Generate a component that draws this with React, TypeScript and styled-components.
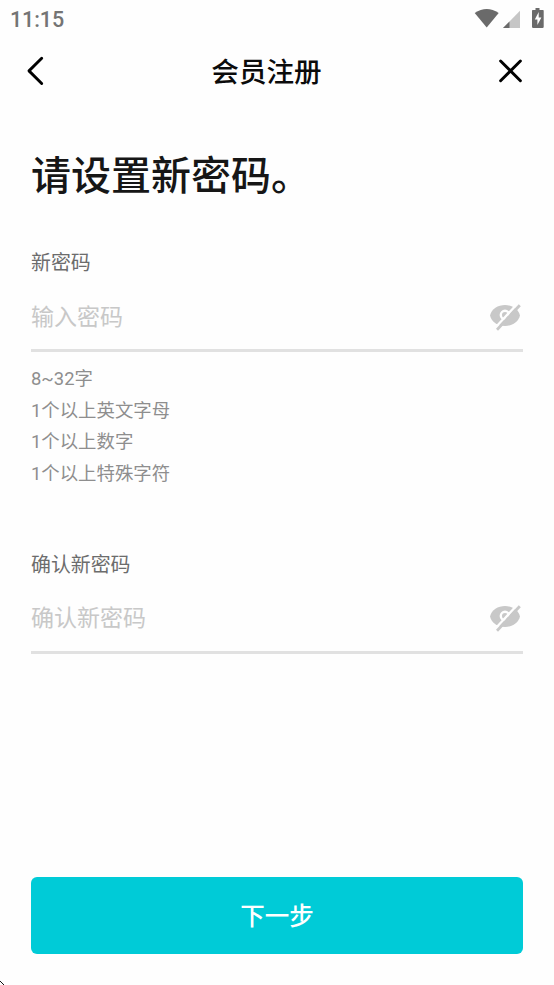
import React from "react";
import styled, { createGlobalStyle } from "styled-components";

const GlobalStyle = createGlobalStyle`
  * { box-sizing: border-box; }
  body {
    margin: 0;
    background: #fefefe;
    font-family: Roboto, "Noto Sans CJK SC", sans-serif;
  }
`;

const Screen = styled.main`
  display: flex;
  flex-direction: column;
  position: relative;
  height: 985px;
  overflow: hidden;
`;

const StatusBar = styled.div`
  display: flex;
  justify-content: space-between;
  height: 40px;
  padding: 0 10px;
`;

const Clock = styled.span`
  color: #747474;
  font-size: 21.5px;
  font-weight: 500;
  line-height: 40px;
  letter-spacing: -0.1px;
`;

const StatusIcons = styled.svg`
  width: 72px;
  height: 40px;
`;

const Header = styled.header`
  display: grid;
  grid-template-columns: 60px 1fr 60px;
  align-items: center;
  height: 62px;
`;

const IconButton = styled.button<{ $side: "start" | "end" }>`
  display: flex;
  justify-self: ${(p) => p.$side};
  margin: ${(p) => (p.$side === "start" ? "0 0 0 22px" : "0 28px 0 0")};
  padding: 0;
  border: 0;
  background: none;
`;

const Title = styled.h1`
  margin: 0;
  padding: 4px 21px 0 0;
  color: #0b0b0b;
  font-size: 27.6px;
  font-weight: 500;
  line-height: 40px;
  text-align: center;
`;

const Content = styled.section`
  display: flex;
  flex-direction: column;
  padding: 45px 31px 0;
`;

const Heading = styled.h2`
  margin: 0 0 44px;
  color: #161616;
  font-size: 40px;
  font-weight: 500;
  line-height: 60px;
`;

const Field = styled.label<{ $gap?: number }>`
  display: flex;
  flex-direction: column;
  margin-top: ${(p) => p.$gap ?? 0}px;
`;

const FieldLabel = styled.span`
  padding-top: 1px;
  color: #6c6c6c;
  font-size: 19.9px;
  line-height: 24px;
`;

const InputRow = styled.span`
  display: flex;
  align-items: center;
  height: 76px;
  padding-top: 6px;
  border-bottom: 3px solid #e1e1e1;
`;

const PasswordInput = styled.input`
  flex: 1;
  min-width: 0;
  height: 44px;
  padding: 3px 0 0;
  border: 0;
  outline: 0;
  background: transparent;
  color: #333;
  font: 400 23px Roboto, "Noto Sans CJK SC", sans-serif;
  &::placeholder { color: #c8c8c8; opacity: 1; }
`;

const Rules = styled.ul`
  margin: 11px 0 0;
  padding: 0;
  list-style: none;
  color: #8e8e8e;
  font-size: 18.4px;
  line-height: 31.6px;
`;

const NextButton = styled.button`
  height: 77px;
  margin: auto 31px 31px;
  padding: 0 0 2px;
  border: 0;
  border-radius: 6px;
  background: #00cbd7;
  color: #fff;
  font: 500 24.5px Roboto, "Noto Sans CJK SC", sans-serif;
`;

const Pointer = styled.svg`
  position: absolute;
  left: 0;
  bottom: 0;
`;

const HiddenEye = () => (
  <svg width="34" height="30" viewBox="0 0 34 30">
    <path d="M1 14.500C2.500 8 9 4 16 4s13.500 4 15 10.500C29.500 21 23 25 16 25S2.500 21 1 14.500Z" fill="#c8c8c8" />
    <circle cx="16" cy="14" r="4.200" fill="none" stroke="#fefefe" strokeWidth="2.400" />
    <path d="M5.800 27.200 28.400 2.900" stroke="#fefefe" strokeWidth="2.400" />
    <path d="M8 28.700 30.800 4.200" stroke="#c8c8c8" strokeWidth="2.800" />
  </svg>
);

function PasswordField(props: { label: string; placeholder: string; gap?: number }) {
  return (
    <Field $gap={props.gap}>
      <FieldLabel>{props.label}</FieldLabel>
      <InputRow>
        <PasswordInput type="password" placeholder={props.placeholder} />
        <HiddenEye />
      </InputRow>
    </Field>
  );
}

const rules = ["8~32字", "1个以上英文字母", "1个以上数字", "1个以上特殊字符"];

export default function App() {
  return (
    <>
      <GlobalStyle />
      <Screen>
        <StatusBar>
          <Clock>11:15</Clock>
          <StatusIcons viewBox="472 0 72 40">
            <path d="M474.700 13Q486.700 5 498.700 13L486.700 27.600Z" fill="#6a6a6a" />
            <path d="M520 10.700V28H503Z" fill="#c6c6c6" />
            <path d="M509.500 21.400V28H503Z" fill="#6a6a6a" />
            <path d="M535.500 8h4v2h3.500q.7 0 .7.800v16q0 1.200-1.200 1.200h-9.300q-1.200 0-1.200-1.200v-16q0-.8.800-.8h2.700Z" fill="#6a6a6a" />
            <path d="M538.700 12 534.800 19.500h2.600V25l4-7.500h-2.700Z" fill="#fff" />
          </StatusIcons>
        </StatusBar>
        <Header>
          <IconButton $side="start" aria-label="返回">
            <svg width="28" height="36" viewBox="0 0 28 36" fill="none" stroke="#000" strokeWidth="2.900" strokeLinecap="round" strokeLinejoin="round">
              <path d="M19.700 5.300 7 17.900 19.700 30.500" />
            </svg>
          </IconButton>
          <Title>会员注册</Title>
          <IconButton $side="end" aria-label="关闭">
            <svg width="30" height="30" viewBox="0 0 30 30" stroke="#000" strokeWidth="2.900" strokeLinecap="round">
              <path d="M4.600 5 24.400 24.800M24.400 5 4.600 24.800" />
            </svg>
          </IconButton>
        </Header>
        <Content>
          <Heading>请设置新密码。</Heading>
          <PasswordField label="新密码" placeholder="输入密码" />
          <Rules>
            {rules.map((r) => <li key={r}>{r}</li>)}
          </Rules>
          <PasswordField label="确认新密码" placeholder="确认新密码" gap={63.6} />
        </Content>
        <NextButton>下一步</NextButton>
        <Pointer width="4" height="5" viewBox="0 0 4 5">
          <path d="M0 1h1v1H0ZM1 2h1v1H1ZM2 3h1v1H2ZM3 4h1v1H3Z" fill="#111" />
        </Pointer>
      </Screen>
    </>
  );
}
